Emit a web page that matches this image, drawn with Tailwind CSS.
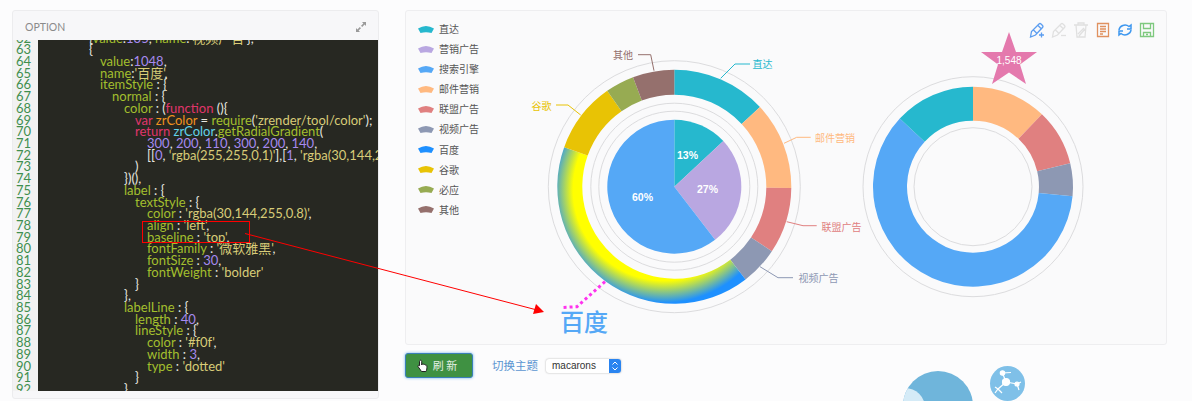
<!DOCTYPE html>
<html>
<head>
    <title>ECharts pie option</title>
    <script src="https://cdn.jsdelivr.net/npm/@tailwindcss/browser@4"></script>
</head>
<body class="bg-[#fcfcfd] h-[401px] overflow-hidden relative font-['Noto_Sans_CJK_SC',sans-serif]">
    <div class="flex gap-[26px] pl-[12px] pt-[10px]">

        <!-- Option panel -->
        <div class="w-[367px] h-[389px] shrink-0 bg-[#f7f7f9] border border-[#ececee] rounded-[3px] overflow-hidden flex flex-col">
            <div class="h-[29px] shrink-0 flex items-center justify-between pl-[12px] pr-[11px]">
                <span class="mt-[5px] text-[10.5px] text-[#8a8a8a] font-['Lato',sans-serif]">OPTION</span>
                <svg width="12" height="12" viewBox="0 0 12 12" fill="#9a9a9a" class="mt-[2px]"><path d="M7 1h4v4L9.600 3.600 7.200 6 6 4.800 8.400 2.400zM5 11H1V7l1.400 1.400L4.800 6 6 7.200 3.600 9.600z"/></svg>
            </div>
            <div class="h-[351px] shrink-0 flex overflow-hidden text-[13px] leading-[11.72px] font-['Lato','Noto_Sans_CJK_SC',sans-serif]">
                <div class="w-[25px] shrink-0 bg-[#f2f2f2] pl-[3px] text-[#3f8f4f]">
                    <div class="-mt-[7.5px]"><div>62</div><div>63</div><div>64</div><div>65</div><div>66</div><div>67</div><div>68</div><div>69</div><div>70</div><div>71</div><div>72</div><div>73</div><div>74</div><div>75</div><div>76</div><div>77</div><div>78</div><div>79</div><div>80</div><div>81</div><div>82</div><div>83</div><div>84</div><div>85</div><div>86</div><div>87</div><div>88</div><div>89</div><div>90</div><div>91</div><div>92</div></div>
                </div>
                <div class="flex-1 bg-[#272822] overflow-hidden">
                    <div class="-mt-[7.5px] whitespace-nowrap text-[#e8e8e0]">
                        <div class="pl-[51px]">{<span class="text-[#a3bf2e]">value</span>:<span class="text-[#a68af0]">135</span>, <span class="text-[#a3bf2e]">name</span>:<span class="text-[#d8cc78]">'视频广告'</span>},</div>
                        <div class="pl-[51px]">{</div>
                        <div class="pl-[62px]"><span class="text-[#a3bf2e]">value</span>:<span class="text-[#a68af0]">1048</span>,</div>
                        <div class="pl-[62px]"><span class="text-[#a3bf2e]">name</span>:<span class="text-[#d8cc78]">'百度'</span>,</div>
                        <div class="pl-[62px]"><span class="text-[#a3bf2e]">itemStyle</span> : {</div>
                        <div class="pl-[74px]"><span class="text-[#a3bf2e]">normal</span> : {</div>
                        <div class="pl-[86px]"><span class="text-[#a3bf2e]">color</span> : (<span class="text-[#e0356b]">function</span> (){</div>
                        <div class="pl-[97px]"><span class="text-[#e0356b]">var</span> <span class="text-[#f0921e]">zrColor</span> = <span class="text-[#a3bf2e]">require</span>(<span class="text-[#d8cc78]">'zrender/tool/color'</span>);</div>
                        <div class="pl-[97px]"><span class="text-[#e0356b]">return</span> <span class="text-[#62d3ea]">zrColor</span>.<span class="text-[#a3bf2e]">getRadialGradient</span>(</div>
                        <div class="pl-[109px] text-[#a68af0]">300<span class="text-[#e8e8e0]">,</span> 200<span class="text-[#e8e8e0]">,</span> 110<span class="text-[#e8e8e0]">,</span> 300<span class="text-[#e8e8e0]">,</span> 200<span class="text-[#e8e8e0]">,</span> 140<span class="text-[#e8e8e0]">,</span></div>
                        <div class="pl-[109px]">[[<span class="text-[#a68af0]">0</span>, <span class="text-[#d8cc78]">'rgba(255,255,0,1)'</span>],[<span class="text-[#a68af0]">1</span>, <span class="text-[#d8cc78]">'rgba(30,144,255,1)'</span>]]</div>
                        <div class="pl-[97px]">)</div>
                        <div class="pl-[86px]">})(),</div>
                        <div class="pl-[86px]"><span class="text-[#a3bf2e]">label</span> : {</div>
                        <div class="pl-[97px]"><span class="text-[#a3bf2e]">textStyle</span> : {</div>
                        <div class="pl-[109px]"><span class="text-[#a3bf2e]">color</span> : <span class="text-[#d8cc78]">'rgba(30,144,255,0.8)'</span>,</div>
                        <div class="pl-[109px]"><span class="text-[#a3bf2e]">align</span> : <span class="text-[#d8cc78]">'left'</span>,</div>
                        <div class="pl-[109px]"><span class="text-[#a3bf2e]">baseline</span> : <span class="text-[#d8cc78]">'top'</span>,</div>
                        <div class="pl-[109px]"><span class="text-[#a3bf2e]">fontFamily</span> : <span class="text-[#d8cc78]">'微软雅黑'</span>,</div>
                        <div class="pl-[109px]"><span class="text-[#a3bf2e]">fontSize</span> : <span class="text-[#a68af0]">30</span>,</div>
                        <div class="pl-[109px]"><span class="text-[#a3bf2e]">fontWeight</span> : <span class="text-[#d8cc78]">'bolder'</span></div>
                        <div class="pl-[97px]">}</div>
                        <div class="pl-[86px]">},</div>
                        <div class="pl-[86px]"><span class="text-[#a3bf2e]">labelLine</span> : {</div>
                        <div class="pl-[97px]"><span class="text-[#a3bf2e]">length</span> : <span class="text-[#a68af0]">40</span>,</div>
                        <div class="pl-[97px]"><span class="text-[#a3bf2e]">lineStyle</span> : {</div>
                        <div class="pl-[109px]"><span class="text-[#a3bf2e]">color</span> : <span class="text-[#d8cc78]">'#f0f'</span>,</div>
                        <div class="pl-[109px]"><span class="text-[#a3bf2e]">width</span> : <span class="text-[#a68af0]">3</span>,</div>
                        <div class="pl-[109px]"><span class="text-[#a3bf2e]">type</span> : <span class="text-[#d8cc78]">'dotted'</span></div>
                        <div class="pl-[97px]">}</div>
                        <div class="pl-[86px]">}</div>
                    </div>
                </div>
            </div>
        </div>

        <!-- Chart column -->
        <div class="w-[762px] shrink-0">
            <div class="relative h-[335px] bg-[#fafafb] border border-[#eeeef0] rounded-[3px]">
                <svg id="chart" class="block w-full h-full" viewBox="406 11 760 333" font-size="10">
                    <defs>
                        <radialGradient id="baidu" gradientUnits="userSpaceOnUse" cx="664" cy="189.800" r="113" fx="664" fy="189.800">
                            <stop offset="0.804" stop-color="#ffff00"/>
                            <stop offset="1" stop-color="#1e90ff"/>
                        </radialGradient>
                    </defs>
                    <g fill="none" stroke="#dcdcde">
                        <circle cx="674.3" cy="186.7" r="126"/>
                        <circle cx="674.3" cy="186.7" r="83.5"/>
                        <circle cx="674.3" cy="186.7" r="75.5"/>
                        <circle cx="973" cy="186.7" r="110"/>
                        <circle cx="973" cy="186.7" r="59"/>
                    </g>
                    <g id="slices"></g>
                    <g fill="none">
                        <path stroke="#26b8ce" d="M720.7 78.3 735 64h15"/>
                        <path stroke="#ffb980" d="M784 143.3 796.7 137.3h14"/>
                        <path stroke="#e08080" d="M786.7 221.7 803 225.7h13.7"/>
                        <path stroke="#8d98b3" d="M760 266.7 778 277.7h15"/>
                        <path stroke="#95706d" d="M654 70.7 650.7 54.7H638"/>
                        <path stroke="#e8c305" d="M580.7 115 568 105H556"/>
                        <path stroke="#ff33ee" stroke-width="3" stroke-dasharray="3 3" d="M605 281.7 577 306.7 562 307.5"/>
                    </g>
                    <g dominant-baseline="central">
                        <text x="752.5" y="63" fill="#26b8ce">直达</text>
                        <text x="815" y="137.5" fill="#ffb980">邮件营销</text>
                        <text x="821.5" y="226" fill="#e08080">联盟广告</text>
                        <text x="798.5" y="277.5" fill="#8d98b3">视频广告</text>
                        <text x="613" y="54.5" fill="#95706d">其他</text>
                        <text x="531.5" y="105" fill="#e8c305">谷歌</text>
                        <text x="560" y="320.5" font-size="24" font-weight="500" fill="#55a8f6">百度</text>
                    </g>
                    <g fill="#ffffff" font-size="10.5" font-weight="bold" font-family="Liberation Sans" text-anchor="middle" dominant-baseline="central">
                        <text x="687.5" y="155">13%</text>
                        <text x="707.5" y="189">27%</text>
                        <text x="642.5" y="197">60%</text>
                    </g>
                    <polygon fill="#e479ad" points="1009,32 1016,52 1037,52 1020,64.5 1026,84 1009,72.5 992,84 998,64.5 981,52 1002,52"/>
                    <text x="1009" y="60.5" fill="#ffffff" font-size="10" font-family="Liberation Sans" text-anchor="middle" dominant-baseline="central">1,548</text>
                </svg>

                <!-- Legend -->
                <div class="absolute left-[12px] top-[8px] flex flex-col text-[10px] text-[#555] leading-[20.1px]">
                    <div class="flex items-center gap-[5px]"><svg width="16" height="9" viewBox="0 0 16 9" fill="#26b8ce"><path d="M0 3.500Q8-1.500 16 3.500L13.500 8Q8 6.500 2.500 8z"/></svg>直达</div>
                    <div class="flex items-center gap-[5px]"><svg width="16" height="9" viewBox="0 0 16 9" fill="#b9a7e1"><path d="M0 3.500Q8-1.500 16 3.500L13.500 8Q8 6.500 2.500 8z"/></svg>营销广告</div>
                    <div class="flex items-center gap-[5px]"><svg width="16" height="9" viewBox="0 0 16 9" fill="#55a8f6"><path d="M0 3.500Q8-1.500 16 3.500L13.500 8Q8 6.500 2.500 8z"/></svg>搜索引擎</div>
                    <div class="flex items-center gap-[5px]"><svg width="16" height="9" viewBox="0 0 16 9" fill="#ffb980"><path d="M0 3.500Q8-1.500 16 3.500L13.500 8Q8 6.500 2.500 8z"/></svg>邮件营销</div>
                    <div class="flex items-center gap-[5px]"><svg width="16" height="9" viewBox="0 0 16 9" fill="#e08080"><path d="M0 3.500Q8-1.500 16 3.500L13.500 8Q8 6.500 2.500 8z"/></svg>联盟广告</div>
                    <div class="flex items-center gap-[5px]"><svg width="16" height="9" viewBox="0 0 16 9" fill="#8d98b3"><path d="M0 3.500Q8-1.500 16 3.500L13.500 8Q8 6.500 2.500 8z"/></svg>视频广告</div>
                    <div class="flex items-center gap-[5px]"><svg width="16" height="9" viewBox="0 0 16 9" fill="#1e90ff"><path d="M0 3.500Q8-1.500 16 3.500L13.500 8Q8 6.500 2.500 8z"/></svg>百度</div>
                    <div class="flex items-center gap-[5px]"><svg width="16" height="9" viewBox="0 0 16 9" fill="#e8c305"><path d="M0 3.500Q8-1.500 16 3.500L13.500 8Q8 6.500 2.500 8z"/></svg>谷歌</div>
                    <div class="flex items-center gap-[5px]"><svg width="16" height="9" viewBox="0 0 16 9" fill="#97ab52"><path d="M0 3.500Q8-1.500 16 3.500L13.500 8Q8 6.500 2.500 8z"/></svg>必应</div>
                    <div class="flex items-center gap-[5px]"><svg width="16" height="9" viewBox="0 0 16 9" fill="#95706d"><path d="M0 3.500Q8-1.500 16 3.500L13.500 8Q8 6.500 2.500 8z"/></svg>其他</div>
                </div>

                <!-- Toolbox -->
                <div class="absolute right-[11px] top-[11px] flex gap-[6px]">
                    <svg width="16" height="16" viewBox="0 0 16 16" fill="none" stroke="#5b9df0" stroke-width="1.300"><path d="M1.500 15 2.500 9.500 10 2a1.500 1.500 0 0 1 2 0l1.500 1.500a1.500 1.500 0 0 1 0 2L6.500 13zM9 3.500l3 3M4.500 8l3 3"/><path d="M12.500 10.500v5M10 13h5"/></svg>
                    <svg width="16" height="16" viewBox="0 0 16 16" fill="none" stroke="#e0e0e0" stroke-width="1.300"><path d="M1.500 15 2.500 9.500 10 2a1.500 1.500 0 0 1 2 0l1.500 1.500a1.500 1.500 0 0 1 0 2L6.500 13zM9 3.500l3 3M4.500 8l3 3"/><path d="M10 13.500h5"/></svg>
                    <svg width="16" height="16" viewBox="0 0 16 16" fill="none" stroke="#e0e0e0" stroke-width="1.300"><path d="M1 3h14M5 3V1h6v2M3 3l1 12h8l1-12M5 12 11 6M6 14l6-7"/></svg>
                    <svg width="16" height="16" viewBox="0 0 16 16" fill="none" stroke="#e0915f" stroke-width="1.300"><path d="M2.500 1.500h11v13h-11zM5 4.500h6M5 7h6M5 9.500h6M5 12h3"/></svg>
                    <svg width="16" height="16" viewBox="0 0 16 16" fill="none" stroke="#3d97ef" stroke-width="1.500"><path d="M2 8a6 5.500 0 0 1 10-3.500L14 3v4h-4M14 8a6 5.500 0 0 1-10 3.500L2 13V9h4"/></svg>
                    <svg width="16" height="16" viewBox="0 0 16 16" fill="none" stroke="#7fc97f" stroke-width="1.300"><path d="M1.500 1.500h13v13h-13zM4.500 1.500v5h7v-5M4.500 14.500v-4h7v4M7 12.500h2"/></svg>
                </div>
            </div>

            <!-- Controls row -->
            <div class="flex items-start h-[48px] mt-[8px]">
                <button class="relative w-[68px] h-[25px] shrink-0 bg-[#3f9142] border border-[#3a7fb8] rounded-[3px] shadow-[0_0_3px_#66afe9] text-[11px] text-[#e4efe4] pl-[12px]">刷 新
                    <svg class="absolute left-[11px] top-[5px]" width="13" height="15" viewBox="0 0 13 15" fill="#fff" stroke="#222" stroke-width="1"><path d="M3 1.500c.8-.7 1.700 0 1.700.8V6l.6-1c1-.3 1.500.1 1.500.6.900-.4 1.500 0 1.600.5.900-.3 1.500.2 1.500 1 .1 2 0 4-1 5.400H4.500C3.500 11 2 9 1 7.500c-.3-.9.400-1.500 1.500-.8V2.300c0-.4.200-.7.500-.8z"/></svg>
                </button>
                <span class="ml-[19px] mt-[4px] text-[11.5px] text-[#5b95d1] shrink-0">切换主题</span>
                <div class="relative ml-[8px] mt-[6px] w-[75px] h-[14px] shrink-0">
                    <select class="block appearance-none w-full h-[14px] leading-[14px] py-0 bg-white rounded-[3px] shadow-[0_0_2px_#aaa] pl-[6px] text-[10px] text-[#333] font-['Liberation_Sans',sans-serif]">
                        <option>macarons</option>
                    </select>
                    <svg class="absolute right-0 top-0 rounded-r-[3px] bg-[#2a84f0]" width="12" height="14" viewBox="0 0 12 14" fill="none" stroke="#fff"><path d="M3.500 5.500 6 3l2.500 2.500M3.500 8.500 6 11l2.500-2.500"/></svg>
                </div>

                <!-- Bubbles of the page below, cut by the window -->
                <div class="ml-[282px] flex items-start h-[48px] overflow-hidden">
                    <div class="relative mt-[18px] w-[70px] h-[70px] shrink-0 rounded-full overflow-hidden bg-[#6fb5db]">
                        <div class="absolute -left-[18px] top-[17px] w-[40px] h-[40px] rounded-full bg-[#d5ebf7]"></div>
                    </div>
                    <div class="ml-[17px] mt-[13px] w-[35px] h-[35px] shrink-0 rounded-full bg-[#7fc0e8]">
                        <svg width="35" height="35" viewBox="0 0 35 35" fill="#fff" stroke="#fff" stroke-width="1.200"><path d="M16 16 12.500 7 21 6.500M16 16l11 2 2 6M27 18l4-2M16 16l-8 7-3 4M8 23l4 4M8 23l-3-2" fill="none"/><circle cx="16" cy="16" r="3.500"/><circle cx="12.500" cy="7" r="2.200"/><circle cx="27" cy="18" r="2"/></svg>
                    </div>
                </div>
            </div>
        </div>
    </div>

    <!-- Annotation drawn on top of the whole page -->
    <svg class="absolute left-0 top-0 pointer-events-none" width="1192" height="401" fill="none" stroke="#ff0000">
        <rect x="142.500" y="221.500" width="107" height="21"/>
        <path d="M245 233.500 537 310"/>
        <path fill="#ff0000" stroke="none" d="M544 312 533 314 536 304z"/>
    </svg>

    <script>
        // donut slices, angles are degrees clockwise from 12 o'clock
        const ns = 'http://www.w3.org/2000/svg';
        const group = document.getElementById('slices');

        function point(cx, cy, r, deg) {
            const a = deg * Math.PI / 180;
            return (cx + r * Math.sin(a)).toFixed(2) + ' ' + (cy - r * Math.cos(a)).toFixed(2);
        }

        function drawSlices(cx, cy, r0, r1, start, data) {
            const total = data.reduce((sum, d) => sum + d[0], 0);
            let from = start;
            data.forEach(([value, fill]) => {
                const to = from + value / total * 360;
                const large = to - from > 180 ? 1 : 0;
                let d = `M${point(cx, cy, r1, from)} A${r1} ${r1} 0 ${large} 1 ${point(cx, cy, r1, to)} `;
                d += r0 > 0
                    ? `L${point(cx, cy, r0, to)} A${r0} ${r0} 0 ${large} 0 ${point(cx, cy, r0, from)}Z`
                    : `L${cx} ${cy}Z`;
                const path = document.createElementNS(ns, 'path');
                path.setAttribute('d', d);
                path.setAttribute('fill', fill);
                group.appendChild(path);
                from = to;
            });
        }

        drawSlices(674.3, 186.7, 0, 67, 0, [[335, '#26b8ce'], [679, '#b9a7e1'], [1548, '#55a8f6']]);
        drawSlices(674.3, 186.7, 92, 117, 0, [
            [335, '#26b8ce'], [310, '#ffb980'], [234, '#e08080'], [135, '#8d98b3'],
            [1048, 'url(#baidu)'], [251, '#e8c305'], [102, '#97ab52'], [147, '#95706d']
        ]);
        drawSlices(973, 186.7, 66, 100, 0, [
            [310, '#ffb980'], [234, '#e08080'], [135, '#8d98b3'], [1548, '#55a8f6'], [335, '#26b8ce']
        ]);
    </script>
</body>
</html>
